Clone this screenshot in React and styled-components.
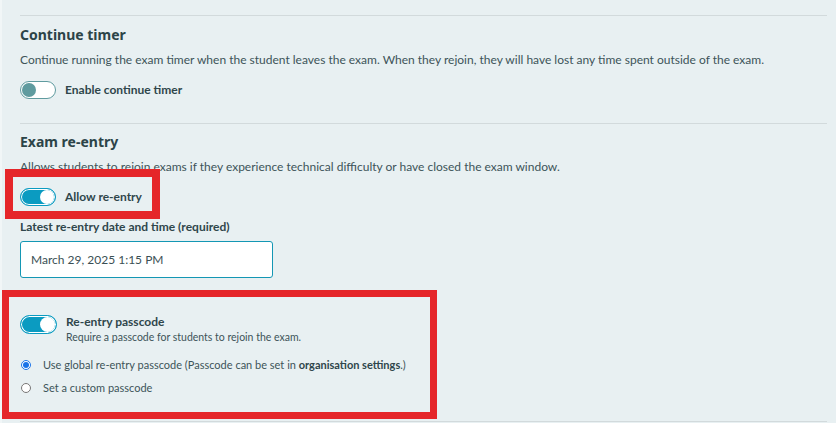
import React from "react";
import styled, { createGlobalStyle } from "styled-components";

const Global = createGlobalStyle`
  html, body {
    margin: 0;
    padding: 0;
    background: #e8f0f2;
  }
  body {
    font-family: "Lato", "Liberation Sans", sans-serif;
    color: #3a5156;
  }
`;

const Page = styled.div`
  width: 836px;
  height: 423px;
  overflow: hidden;
  box-sizing: border-box;
  border-left: 2px solid #f1f6f7;
  padding: 15px 9px 0 18px;
`;

const Divider = styled.hr`
  margin: ${(p) => p.$mt ?? 0}px 0 0;
  border: none;
  border-top: 1px solid #d2dadc;
`;

const Section = styled.section`
  padding: ${(p) => p.$pad || "9px 0 24px"};
  display: flex;
  flex-direction: column;
  align-items: flex-start;
`;

const Heading = styled.h2`
  margin: 0;
  font-family: "Noto Sans", "Lato", sans-serif;
  font-size: 14px;
  line-height: 20px;
  font-weight: 700;
  color: #2c4448;
`;

const Desc = styled.p`
  margin: 7px 0 0;
  font-size: 12px;
  line-height: 16px;
  color: #3d5459;
`;

const ToggleRow = styled.div`
  display: flex;
  align-items: ${(p) => (p.$top ? "flex-start" : "center")};
  gap: 9px;
  margin-top: ${(p) => p.$mt ?? 13}px;
`;

const Track = styled.span`
  position: relative;
  flex: none;
  width: ${(p) => (p.$big ? 37 : 36)}px;
  height: ${(p) => (p.$big ? 19 : 18)}px;
  box-sizing: border-box;
  border-radius: 10px;
  border: 1px solid ${(p) => (p.$on ? "#0b9bc1" : "#5f9b9f")};
  box-shadow: inset 0 0 0 1px #ffffff;
  background: ${(p) => (p.$on ? "#0b9bc1" : "#ffffff")};
  margin-top: ${(p) => p.$mt ?? 0}px;
`;

const Knob = styled.span`
  position: absolute;
  top: 1px;
  ${(p) => (p.$on ? "right: 1px;" : "left: 1px;")}
  width: ${(p) => (p.$big ? 15 : 14)}px;
  height: ${(p) => (p.$big ? 15 : 14)}px;
  border-radius: 50%;
  background: ${(p) => (p.$on ? "#ffffff" : "#5f9b9f")};
`;

const Label = styled.span`
  font-size: 12px;
  line-height: 16px;
  font-weight: 700;
  color: #2f464b;
`;

const SubText = styled.span`
  display: block;
  font-size: 10.5px;
  line-height: 15px;
  color: #3d5459;
`;

const FieldLabel = styled.label`
  display: block;
  margin-top: 13px;
  font-size: 12px;
  line-height: 16px;
  font-weight: 700;
  color: #2f464b;
`;

const Input = styled.div`
  margin-top: 6px;
  width: 253px;
  height: 37px;
  box-sizing: border-box;
  border: 1px solid #1497b4;
  border-radius: 3px;
  background: #ffffff;
  padding: 0 10px;
  display: flex;
  align-items: center;
  font-size: 12px;
  color: #3a4f54;
`;

const Highlight = styled.div`
  position: relative;
  margin-top: ${(p) => p.$mt ?? 0}px;
`;

const Frame = styled.span`
  position: absolute;
  top: ${(p) => p.$t}px;
  left: ${(p) => p.$l}px;
  right: ${(p) => p.$r}px;
  bottom: ${(p) => p.$b}px;
  border: ${(p) => p.$w}px solid #e5262a;
  pointer-events: none;
`;

const Radios = styled.div`
  margin-top: 12px;
  display: flex;
  flex-direction: column;
  gap: 7px;
`;

const RadioRow = styled.label`
  display: flex;
  align-items: center;
  gap: 12px;
  font-size: 11px;
  line-height: 16px;
  color: #3d5459;
  input {
    margin: 0 0 0 1px;
    width: 10px;
    height: 10px;
    accent-color: #1a73e8;
  }
  b {
    font-weight: 700;
    color: #2f464b;
  }
`;

const Toggle = ({ on, mt, big }) => (
  <Track $on={on} $mt={mt} $big={big}>
    <Knob $on={on} $big={big} />
  </Track>
);

const App = () => {
  return (
    <>
      <Global />
      <Page>
        <Divider />
        <Section>
          <Heading>Continue timer</Heading>
          <Desc>
            Continue running the exam timer when the student leaves the exam. When they rejoin, they
            will have lost any time spent outside of the exam.
          </Desc>
          <ToggleRow>
            <Toggle on={false} />
            <Label>Enable continue timer</Label>
          </ToggleRow>
        </Section>
        <Divider />
        <Section $pad="8px 0 0">
          <Heading>Exam re-entry</Heading>
          <Desc>
            Allows students to rejoin exams if they experience technical difficulty or have closed the
            exam window.
          </Desc>
          <Highlight $mt={13}>
            <ToggleRow $mt={0}>
              <Toggle on />
              <Label>Allow re-entry</Label>
            </ToggleRow>
            <Frame $t={-19} $l={-15} $r={-18} $b={-13} $w={8} />
          </Highlight>
          <FieldLabel>Latest re-entry date and time (required)</FieldLabel>
          <Input>March 29, 2025 1:15 PM</Input>
          <Highlight $mt={32}>
            <ToggleRow $mt={0} $top>
              <Toggle on big mt={5} />
              <div>
                <Label>Re-entry passcode</Label>
                <SubText>Require a passcode for students to rejoin the exam.</SubText>
              </div>
            </ToggleRow>
            <Radios>
              <RadioRow>
                <input type="radio" name="pc" defaultChecked />
                <span>
                  Use global re-entry passcode (Passcode can be set in <b>organisation settings</b>.)
                </span>
              </RadioRow>
              <RadioRow>
                <input type="radio" name="pc" />
                <span>Set a custom passcode</span>
              </RadioRow>
            </Radios>
            <Frame $t={-20} $l={-18} $r={-31} $b={-23} $w={7} />
          </Highlight>
        </Section>
        <Divider $mt={25} />
      </Page>
    </>
  );
};

export default App;
